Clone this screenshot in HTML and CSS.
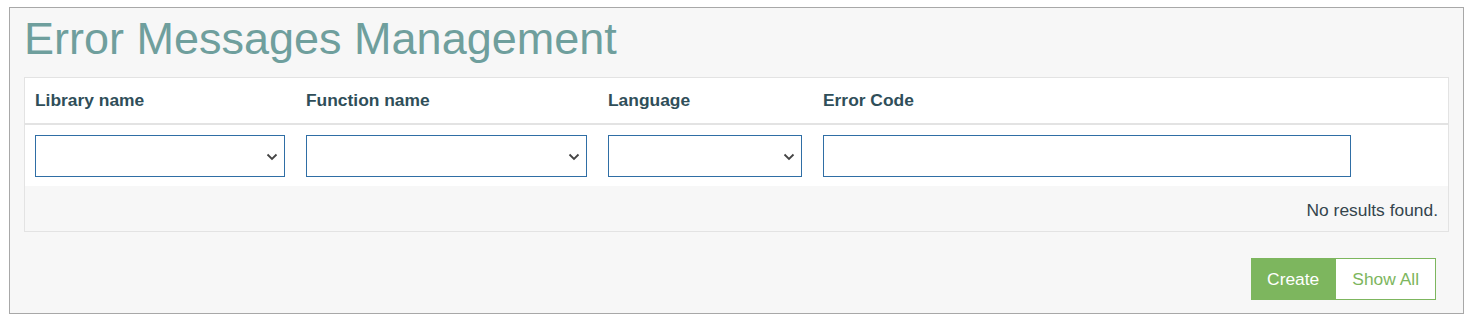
FILE: index.html
```html
<!DOCTYPE html>
<html>
<head>
    <title>Error Messages Management</title>
    <link rel="stylesheet" href="styles.css">
</head>
<body>
    <div class="panel">
        <h1 class="title">Error Messages Management</h1>

        <div class="grid-view">
            <div class="grid-row grid-head">
                <div class="col-label">Library name</div>
                <div class="col-label">Function name</div>
                <div class="col-label">Language</div>
                <div class="col-label">Error Code</div>
            </div>

            <div class="grid-row grid-filters">
                <div class="select-wrap">
                    <select class="filter"><option></option></select>
                    <svg class="chevron" viewBox="0 0 12 8" width="12" height="8"><path d="M1.5 1.5 L6 6 L10.5 1.5" fill="none" stroke="#444" stroke-width="1.8"/></svg>
                </div>
                <div class="select-wrap">
                    <select class="filter"><option></option></select>
                    <svg class="chevron" viewBox="0 0 12 8" width="12" height="8"><path d="M1.5 1.5 L6 6 L10.5 1.5" fill="none" stroke="#444" stroke-width="1.8"/></svg>
                </div>
                <div class="select-wrap">
                    <select class="filter"><option></option></select>
                    <svg class="chevron" viewBox="0 0 12 8" width="12" height="8"><path d="M1.5 1.5 L6 6 L10.5 1.5" fill="none" stroke="#444" stroke-width="1.8"/></svg>
                </div>
                <input type="text" class="filter">
            </div>

            <div class="grid-empty">No results found.</div>
        </div>

        <div class="actions">
            <button class="btn btn-create">Create</button>
            <button class="btn btn-outline">Show All</button>
        </div>
    </div>
</body>
</html>
```

FILE: styles.css
```css
body { margin: 7px 9px; font-family: "Liberation Sans", Arial, sans-serif; background: #fff; }
.panel { border: 1px solid #a8a8a8; background: #f7f7f7; padding: 0 14px 13px; }
.title { font-size: 45px; font-weight: normal; line-height: 50px; color: #6f9f9d; margin: 6px 0 13px; }

.grid-view { border: 1px solid #e3e3e3; background: #fff; }
.grid-row { display: grid; grid-template-columns: 250px 281px 194px 528px; column-gap: 21px; padding: 0 10px; }
.grid-head { padding-top: 11px; padding-bottom: 12px; border-bottom: 2px solid #e3e3e3; }
.col-label { font-size: 17.4px; font-weight: bold; line-height: 22px; color: #2f4e59; }
.grid-filters { padding-top: 10px; padding-bottom: 9px; }

.select-wrap { position: relative; }
.filter { box-sizing: border-box; width: 100%; height: 42px; border: 1px solid #2f6ea5; background: #fff; border-radius: 0; font-family: inherit; font-size: 16px; padding: 0 10px; margin: 0; outline: none; }
select.filter { appearance: none; -webkit-appearance: none; }
.chevron { position: absolute; right: 7px; top: 18px; pointer-events: none; }

.grid-empty { background: #f7f7f7; text-align: right; font-size: 17.4px; line-height: 22px; padding: 13px 10px 10px; color: #34454d; }

.actions { display: flex; justify-content: flex-end; margin: 26px 13px 0 0; }
.btn { font-family: inherit; font-size: 17.4px; line-height: 22px; padding: 9px 16px; border: 1px solid #7db65e; margin: 0; cursor: pointer; }
.btn-create { background: #7db65e; color: #fff; padding: 9px 15px; }
.btn-outline { background: #fff; color: #7db65e; }
```
